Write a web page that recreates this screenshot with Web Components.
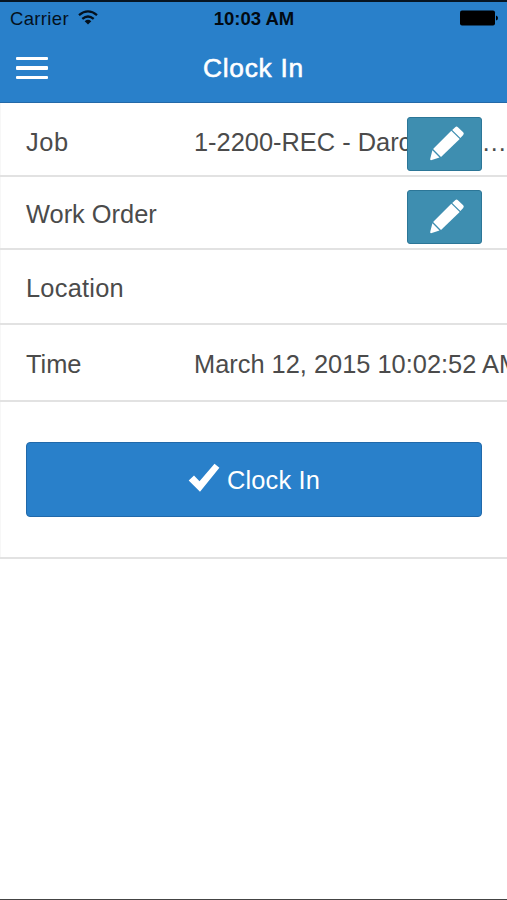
<!DOCTYPE html>
<html lang="en"><head><meta charset="utf-8"><title>Clock In</title>
<style>html,body{margin:0;background:#fff}body{width:507px;height:900px;overflow:hidden;font-family:"Liberation Sans",Arial,sans-serif;color:#4b4b4b}</style></head>
<body><clock-app></clock-app>
<script>
const define = (name, html) => customElements.define(name, class extends HTMLElement {
  constructor() { super(); this.attachShadow({mode: 'open'}).innerHTML = html; }
});
define('status-bar', `<style>
:host{display:grid;grid-template-columns:1fr auto 1fr;align-items:center;height:34px;box-sizing:border-box;padding:1px 9px 0 10px;border-top:2px solid #071522;color:#04111e;font-size:18.5px;line-height:22px}
.left{display:flex;align-items:center;gap:9px;letter-spacing:.35px}
.time{font-weight:bold;font-size:18.5px;color:#020a12}
.wifi{margin-top:-2px}.battery{justify-self:end;margin-top:-1px}svg{display:block}
</style>
<div class="left"><span>Carrier</span><svg class="wifi" width="20" height="15" viewBox="0 0 20 15"><g fill="none" stroke="#04111e" stroke-width="2.3"><path d="M1 5.2Q10 -2.4 19 5.2"/><path d="M4.3 8.9Q10 4 15.7 8.9"/></g><path d="M6.7 11.2Q10 8.4 13.3 11.2L10 14.6Z" fill="#04111e"/></svg></div>
<span class="time">10:03 AM</span>
<svg class="battery" width="38" height="16" viewBox="0 0 38 16"><rect width="35" height="15" x="0" y=".5" rx="2" fill="#000"/><path d="M36 5.5Q38 6 38 8T36 10.5Z" fill="#000"/></svg>`);
define('title-bar', `<style>
:host{display:grid;grid-template-columns:32px 1fr 32px;align-items:center;height:69px;box-sizing:border-box;padding:0 16px;border-bottom:1px solid #2369a8;color:#fff}
h1{margin:0;font-size:26.3px;font-weight:400;line-height:30px;text-align:center;letter-spacing:.75px;-webkit-text-stroke:.55px #fff}
.menu{display:flex;flex-direction:column;gap:6px;width:32px}.menu i{height:3.5px;background:#fff;border-radius:1px}
</style><div class="menu"><i></i><i></i><i></i></div><h1><slot></slot></h1>`);
define('form-row', `<style>
:host{display:grid;grid-template-columns:168px minmax(0,1fr);align-items:center;box-sizing:border-box;height:var(--h);padding:var(--drop,2px) 0 0 26px;border-bottom:2px solid #e2e2e2;position:relative;font-size:25.4px;line-height:30px;white-space:nowrap}
.label{letter-spacing:var(--track,0)}
.value{display:flex;justify-content:space-between;overflow:hidden}
</style><span class="label"><slot name="label"></slot></span><div class="value"><slot></slot></div><slot name="action"></slot>`);
define('edit-button', `<style>
:host{position:absolute;right:25px;top:var(--top,14px);width:75px;height:54px;box-sizing:border-box;background:#3e8eb0;border:1.5px solid #2c7697;border-radius:3px;display:grid;place-items:center}
svg{display:block;margin:-3px 0 0 4px}
</style><svg width="36" height="36" viewBox="0 0 36 36"><g fill="#fff"><path d="M26.2 2.2Q27.5 .9 28.9 2.2L34.2 7.3Q35.4 8.6 34.2 9.9L31.4 12.9L23.2 4.9Z"/><path d="M22.3 5.7L30.7 13.9L12 32L4.1 24Z"/><path d="M3.4 25.2L10.5 32.4L2 35.2Q.8 35 1.3 33.5Z"/></g></svg>`);
define('submit-button', `<style>
:host{display:flex;align-items:center;justify-content:center;gap:7px;height:75px;box-sizing:border-box;background:#2980ca;border:1.5px solid #2169aa;border-radius:4px;color:#fff;font-size:25.4px;line-height:30px;letter-spacing:.15px}
svg{display:block;margin-top:-3px}span{padding-top:1px}
</style><svg width="32" height="30" viewBox="0 0 32 30"><path d="M.7 17.5L6 12.5L11.5 18.3L26.5.8L31.4 4.8L12 28.8Z" fill="#fff"/></svg><span><slot></slot></span>`);
define('clock-app', `<style>
:host{display:block;width:507px;height:900px;box-sizing:border-box;background:#fff;border-bottom:1px solid #444}
header{background:#2980ca;height:103px}
main{display:block;border-left:1px solid #f7f7f7}
form-row{margin-left:-1px}
.submit{box-sizing:border-box;height:157px;margin-left:-1px;padding:40px 25px 0 26px;border-bottom:2px solid #e2e2e2}
</style><header><status-bar></status-bar><title-bar>Clock In</title-bar></header>
<main>
<form-row style="--h:74px;--drop:5px;--track:.6px"><span slot="label">Job</span><span>1-2200-REC - Darc</span><span>…</span><edit-button slot="action"></edit-button></form-row>
<form-row style="--h:73px;--top:13px"><span slot="label">Work Order</span><edit-button slot="action"></edit-button></form-row>
<form-row style="--h:75px;--track:.25px"><span slot="label">Location</span></form-row>
<form-row style="--h:77px"><span slot="label">Time</span><span>March 12, 2015 10:02:52 AM</span></form-row>
<div class="submit"><submit-button>Clock In</submit-button></div>
</main>`);
</script></body></html>
